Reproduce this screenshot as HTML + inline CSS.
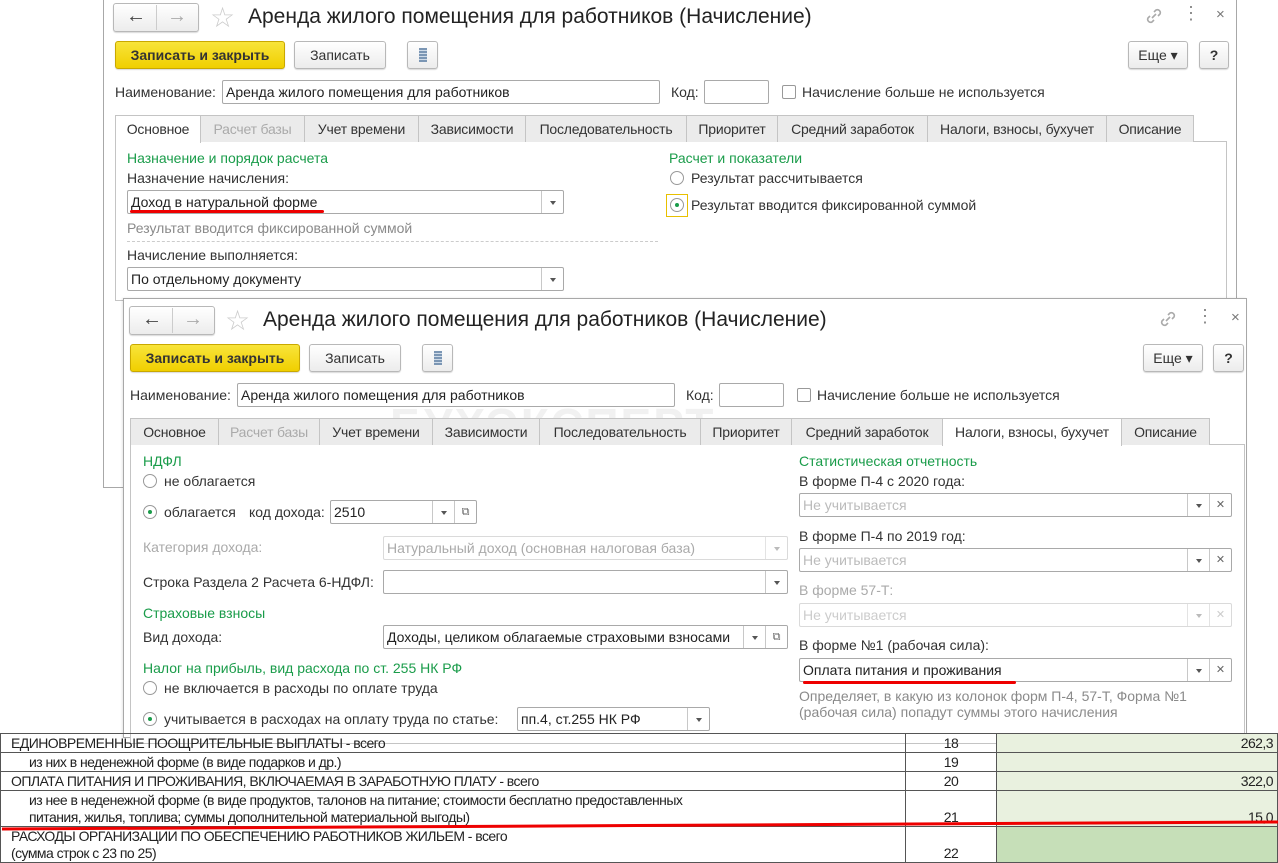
<!DOCTYPE html>
<html><head><meta charset="utf-8"><style>
*{box-sizing:border-box;margin:0;padding:0}
body{width:1278px;height:861px;position:relative;overflow:hidden;background:#fff;font-family:"Liberation Sans",Arial,sans-serif;font-size:14px;color:#333}
.a{position:absolute;white-space:nowrap}
.win{position:absolute;background:#fff;border:1px solid #a8a8a8}
.btn{position:absolute;border:1px solid #b8b8b8;border-radius:3px;background:linear-gradient(#fff,#ececec);box-shadow:0 1px 1px rgba(0,0,0,.15);text-align:center;font-size:14px;color:#333;white-space:nowrap}
.yb{background:linear-gradient(#f8e43a,#f0cf00);border-color:#c9a800;font-weight:bold;color:#333}
.inp{position:absolute;border:1px solid #a9a9a9;border-radius:2px;background:#fff;height:24px;line-height:22px;padding-left:3px;font-size:14px;color:#222;overflow:hidden;white-space:nowrap}
.dd{position:absolute;top:0;bottom:0;width:22px;border-left:1px solid #c8c8c8}
.dd:after{content:"";position:absolute;left:8px;top:10px;border:3px solid transparent;border-top:4px solid #555}
.cl{position:absolute;top:0;bottom:0;width:22px;border-left:1px solid #c8c8c8;text-align:center;line-height:22px;font-size:11px;color:#666}
.dis{border-color:#dadada;color:#aaa}
.dis .dd{border-color:#e3e3e3}.dis .dd:after{border-top-color:#bbb}
.tab{position:absolute;height:27px;border:1px solid #c4c4c4;border-bottom:none;background:#ebebeb;line-height:26px;text-align:center;font-size:14px;color:#333;white-space:nowrap;overflow:hidden;letter-spacing:-.2px}
.tab.act{background:#fff;height:28px}
.tab.g{color:#aaa}
.panel{position:absolute;border:1px solid #c4c4c4;background:#fff}
.grn{color:#1a9c4a}
.gr{color:#8a8a8a}
.rad{position:absolute;width:14px;height:14px;border:1px solid #999;border-radius:50%;background:#fff}
.rad.on:after{content:"";position:absolute;left:4px;top:4px;width:4px;height:4px;border-radius:50%;background:#1a9c4a}
.chk{position:absolute;width:14px;height:14px;border:1px solid #999;border-radius:2px;background:#fff}
table{position:absolute;left:0;top:733px;width:1278px;border-collapse:collapse;font-size:14px;color:#222;letter-spacing:-.55px}
td{border:1px solid #555;padding:0 10px;vertical-align:bottom;line-height:17px;white-space:nowrap}
td.n{text-align:center}
td.v{text-align:right;background:#e9f1df;padding-right:4px}
</style></head><body>

<!-- Window 1 -->
<div class="win" style="left:103px;top:-2px;width:1134px;height:490px"></div>
<div class="btn" style="left:113px;top:3px;width:86px;height:29px"></div>
<div class="a" style="left:156px;top:5px;width:1px;height:25px;background:#ccc"></div>
<div class="a" style="left:126px;top:5px;font-size:20px;font-weight:bold;color:#444">&#8592;</div>
<div class="a" style="left:167px;top:5px;font-size:20px;font-weight:bold;color:#aaa">&#8594;</div>
<div class="a" style="left:210px;top:1px;font-size:28px;color:#ccc">&#9734;</div>
<div class="a" style="left:248px;top:5px;font-size:21px;color:#222">Аренда жилого помещения для работников (Начисление)</div>
<svg class="a" style="left:1144px;top:6px" width="20" height="20" viewBox="0 0 20 20"><path d="M8 12l4-4M6 10l-2 2a3 3 0 004 4l2-2M14 10l2-2a3 3 0 00-4-4l-2 2" stroke="#aaa" stroke-width="1.6" fill="none"/></svg>
<div class="a" style="left:1182px;top:3px;font-size:18px;color:#888">&#8942;</div>
<div class="a" style="left:1216px;top:6px;font-size:15px;color:#777">&#215;</div>

<div class="btn yb" style="left:115px;top:41px;width:170px;height:28px;line-height:26px">Записать и закрыть</div>
<div class="btn" style="left:294px;top:41px;width:92px;height:28px;line-height:26px">Записать</div>
<div class="btn" style="left:407px;top:41px;width:31px;height:28px"><div style="position:absolute;left:11px;top:6px;width:8px;height:14px;background:repeating-linear-gradient(#7b96b4 0 2px,#cfdbe8 2px 3px)"></div></div>
<div class="btn" style="left:1128px;top:41px;width:60px;height:28px;line-height:26px">Еще &#9662;</div>
<div class="btn" style="left:1199px;top:41px;width:30px;height:28px;line-height:26px;font-weight:bold">?</div>

<div class="a" style="left:115px;top:84px">Наименование:</div>
<div class="inp" style="left:222px;top:80px;width:438px">Аренда жилого помещения для работников</div>
<div class="a" style="left:671px;top:84px">Код:</div>
<div class="inp" style="left:704px;top:80px;width:65px"></div>
<div class="chk" style="left:782px;top:85px"></div>
<div class="a" style="left:802px;top:84px">Начисление больше не используется</div>

<div class="panel" style="left:115px;top:141px;width:1112px;height:160px"></div>
<div class="tab act" style="left:115px;top:115px;width:86px">Основное</div>
<div class="tab g" style="left:200px;top:115px;width:105px">Расчет базы</div>
<div class="tab" style="left:304px;top:115px;width:115px">Учет времени</div>
<div class="tab" style="left:418px;top:115px;width:108px">Зависимости</div>
<div class="tab" style="left:525px;top:115px;width:162px">Последовательность</div>
<div class="tab" style="left:686px;top:115px;width:92px">Приоритет</div>
<div class="tab" style="left:777px;top:115px;width:151px">Средний заработок</div>
<div class="tab" style="left:927px;top:115px;width:180px">Налоги, взносы, бухучет</div>
<div class="tab" style="left:1106px;top:115px;width:88px">Описание</div>

<div class="a grn" style="left:127px;top:150px">Назначение и порядок расчета</div>
<div class="a" style="left:127px;top:170px">Назначение начисления:</div>
<div class="inp" style="left:127px;top:190px;width:437px">Доход в натуральной форме<div class="dd" style="right:0"></div></div>
<div class="a" style="left:130px;top:210px;width:194px;height:3px;background:#e00;border-radius:2px"></div>
<div class="a gr" style="left:127px;top:220px">Результат вводится фиксированной суммой</div>
<div class="a" style="left:127px;top:241px;width:531px;border-top:1px dashed #ccc"></div>
<div class="a" style="left:127px;top:247px">Начисление выполняется:</div>
<div class="inp" style="left:127px;top:267px;width:437px">По отдельному документу<div class="dd" style="right:0"></div></div>

<div class="a grn" style="left:669px;top:150px">Расчет и показатели</div>
<div class="rad" style="left:670px;top:171px"></div>
<div class="a" style="left:691px;top:170px">Результат рассчитывается</div>
<div class="a" style="left:666px;top:194px;width:22px;height:23px;border:1px solid #e8c000"></div>
<div class="rad on" style="left:670px;top:198px"></div>
<div class="a" style="left:691px;top:197px">Результат вводится фиксированной суммой</div>

<!-- Window 2 -->
<div class="win" style="left:123px;top:298px;width:1124px;height:440px;box-shadow:-1px 0 2px rgba(0,0,0,.1)"></div>
<div class="btn" style="left:129px;top:306px;width:86px;height:29px"></div>
<div class="a" style="left:172px;top:308px;width:1px;height:25px;background:#ccc"></div>
<div class="a" style="left:142px;top:308px;font-size:20px;font-weight:bold;color:#444">&#8592;</div>
<div class="a" style="left:183px;top:308px;font-size:20px;font-weight:bold;color:#aaa">&#8594;</div>
<div class="a" style="left:225px;top:304px;font-size:28px;color:#ccc">&#9734;</div>
<div class="a" style="left:263px;top:308px;font-size:21px;color:#222">Аренда жилого помещения для работников (Начисление)</div>
<svg class="a" style="left:1158px;top:309px" width="20" height="20" viewBox="0 0 20 20"><path d="M8 12l4-4M6 10l-2 2a3 3 0 004 4l2-2M14 10l2-2a3 3 0 00-4-4l-2 2" stroke="#aaa" stroke-width="1.6" fill="none"/></svg>
<div class="a" style="left:1196px;top:306px;font-size:18px;color:#888">&#8942;</div>
<div class="a" style="left:1231px;top:309px;font-size:15px;color:#777">&#215;</div>

<div class="btn yb" style="left:130px;top:344px;width:170px;height:28px;line-height:26px">Записать и закрыть</div>
<div class="btn" style="left:309px;top:344px;width:92px;height:28px;line-height:26px">Записать</div>
<div class="btn" style="left:422px;top:344px;width:31px;height:28px"><div style="position:absolute;left:11px;top:6px;width:8px;height:14px;background:repeating-linear-gradient(#7b96b4 0 2px,#cfdbe8 2px 3px)"></div></div>
<div class="btn" style="left:1143px;top:344px;width:60px;height:28px;line-height:26px">Еще &#9662;</div>
<div class="btn" style="left:1213px;top:344px;width:31px;height:28px;line-height:26px;font-weight:bold">?</div>

<div class="a" style="left:130px;top:387px">Наименование:</div>
<div class="inp" style="left:237px;top:383px;width:438px">Аренда жилого помещения для работников</div>
<div class="a" style="left:686px;top:387px">Код:</div>
<div class="inp" style="left:719px;top:383px;width:65px"></div>
<div class="chk" style="left:797px;top:388px"></div>
<div class="a" style="left:817px;top:387px">Начисление больше не используется</div>

<div class="a" style="left:390px;top:398px;font-size:46px;font-weight:bold;color:#f1f1f1;letter-spacing:2px">БУХЭКСПЕРТ</div>

<div class="panel" style="left:130px;top:444px;width:1115px;height:300px"></div>
<div class="tab" style="left:130px;top:418px;width:89px">Основное</div>
<div class="tab g" style="left:218px;top:418px;width:102px">Расчет базы</div>
<div class="tab" style="left:319px;top:418px;width:114px">Учет времени</div>
<div class="tab" style="left:432px;top:418px;width:108px">Зависимости</div>
<div class="tab" style="left:539px;top:418px;width:162px">Последовательность</div>
<div class="tab" style="left:700px;top:418px;width:92px">Приоритет</div>
<div class="tab" style="left:791px;top:418px;width:152px">Средний заработок</div>
<div class="tab act" style="left:942px;top:418px;width:180px">Налоги, взносы, бухучет</div>
<div class="tab" style="left:1121px;top:418px;width:89px">Описание</div>

<div class="a grn" style="left:143px;top:453px">НДФЛ</div>
<div class="rad" style="left:143px;top:474px"></div>
<div class="a" style="left:164px;top:473px">не облагается</div>
<div class="rad on" style="left:143px;top:505px"></div>
<div class="a" style="left:164px;top:504px">облагается</div>
<div class="a" style="left:249px;top:504px">код дохода:</div>
<div class="inp" style="left:330px;top:500px;width:147px">2510<div class="dd" style="right:22px"></div><div class="cl" style="right:0">&#10697;</div></div>

<div class="a" style="left:143px;top:539px;color:#aaa">Категория дохода:</div>
<div class="inp dis" style="left:383px;top:536px;width:405px">Натуральный доход (основная налоговая база)<div class="dd" style="right:0"></div></div>
<div class="a" style="left:143px;top:574px">Строка Раздела 2 Расчета 6-НДФЛ:</div>
<div class="inp" style="left:383px;top:570px;width:405px"><div class="dd" style="right:0"></div></div>
<div class="a grn" style="left:143px;top:605px">Страховые взносы</div>
<div class="a" style="left:143px;top:629px">Вид дохода:</div>
<div class="inp" style="left:383px;top:625px;width:405px">Доходы, целиком облагаемые страховыми взносами<div class="dd" style="right:22px;background:#fff"></div><div class="cl" style="right:0;background:#fff">&#10697;</div></div>
<div class="a grn" style="left:143px;top:660px">Налог на прибыль, вид расхода по ст. 255 НК РФ</div>
<div class="rad" style="left:143px;top:681px"></div>
<div class="a" style="left:164px;top:680px">не включается в расходы по оплате труда</div>
<div class="rad on" style="left:143px;top:712px"></div>
<div class="a" style="left:164px;top:711px">учитывается в расходах на оплату труда по статье:</div>
<div class="inp" style="left:517px;top:707px;width:193px">пп.4, ст.255 НК РФ<div class="dd" style="right:0"></div></div>

<div class="a grn" style="left:799px;top:453px">Статистическая отчетность</div>
<div class="a" style="left:799px;top:473px">В форме П-4 с 2020 года:</div>
<div class="inp" style="left:799px;top:493px;width:433px;color:#bbb">Не учитывается<div class="dd" style="right:22px"></div><div class="cl" style="right:0">&#10005;</div></div>
<div class="a" style="left:799px;top:528px">В форме П-4 по 2019 год:</div>
<div class="inp" style="left:799px;top:548px;width:433px;color:#bbb">Не учитывается<div class="dd" style="right:22px"></div><div class="cl" style="right:0">&#10005;</div></div>
<div class="a" style="left:799px;top:582px;color:#aaa">В форме 57-Т:</div>
<div class="inp dis" style="left:799px;top:603px;width:433px;color:#ccc">Не учитывается<div class="dd" style="right:22px"></div><div class="cl" style="right:0;color:#ccc;border-color:#e3e3e3">&#10005;</div></div>
<div class="a" style="left:799px;top:637px">В форме №1 (рабочая сила):</div>
<div class="inp" style="left:799px;top:658px;width:433px">Оплата питания и проживания<div class="dd" style="right:22px"></div><div class="cl" style="right:0">&#10005;</div></div>
<div class="a" style="left:803px;top:681px;width:213px;height:3px;background:#e00;border-radius:2px"></div>
<div class="a gr" style="left:799px;top:688px;line-height:16px">Определяет, в какую из колонок форм П-4, 57-Т, Форма №1<br>(рабочая сила) попадут суммы этого начисления</div>

<!-- Table -->
<table>
<colgroup><col style="width:905px"><col style="width:92px"><col style="width:281px"></colgroup>
<tr style="height:19px"><td>ЕДИНОВРЕМЕННЫЕ ПООЩРИТЕЛЬНЫЕ ВЫПЛАТЫ - всего</td><td class="n">18</td><td class="v">262,3</td></tr>
<tr style="height:19px"><td style="padding-left:28px">из них в неденежной форме (в виде подарков и др.)</td><td class="n">19</td><td class="v"></td></tr>
<tr style="height:19px"><td>ОПЛАТА ПИТАНИЯ И ПРОЖИВАНИЯ, ВКЛЮЧАЕМАЯ В ЗАРАБОТНУЮ ПЛАТУ - всего</td><td class="n">20</td><td class="v">322,0</td></tr>
<tr style="height:36px"><td style="padding-left:28px">из нее в неденежной форме (в виде продуктов, талонов на питание; стоимости бесплатно предоставленных<br>питания, жилья, топлива; суммы дополнительной материальной выгоды)</td><td class="n">21</td><td class="v">15,0</td></tr>
<tr style="height:36px"><td>РАСХОДЫ ОРГАНИЗАЦИИ ПО ОБЕСПЕЧЕНИЮ РАБОТНИКОВ ЖИЛЬЕМ - всего<br>(сумма строк с 23 по 25)</td><td class="n">22</td><td class="v" style="background:#c6dfb8"></td></tr>
</table>
<svg class="a" style="left:0;top:818px" width="1278" height="16"><path d="M2 11 Q600 8 1278 4" stroke="#e00" stroke-width="3" fill="none"/></svg>
</body></html>
